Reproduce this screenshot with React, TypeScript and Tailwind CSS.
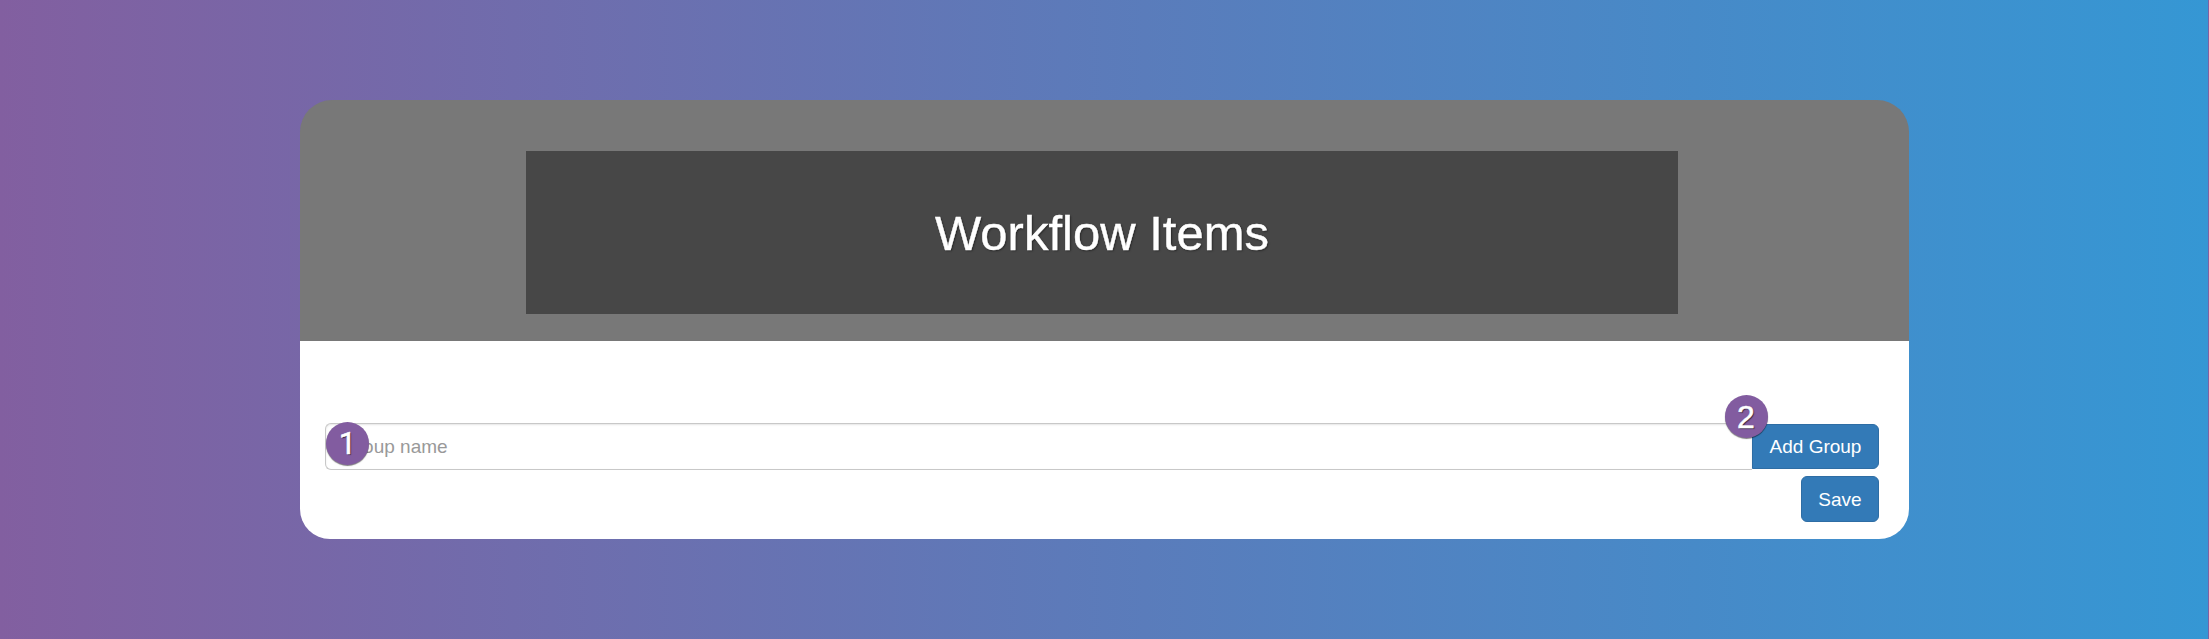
function Badge({ label, className }: { label: string; className: string }) {
  return (
    <span
      className={`absolute z-10 flex h-[43px] w-[43px] items-center justify-center rounded-full bg-[#825ca0] leading-none text-white shadow-[0_1px_1px_rgba(0,0,0,0.5)] [text-shadow:1px_1px_1px_rgba(0,0,0,0.6)] [-webkit-text-stroke:0.5px_white] ${className}`}
    >
      {label}
    </span>
  );
}

export default function App() {
  return (
    <main className="h-[639px] w-full bg-[linear-gradient(to_right,#825fa0,#3597d4)] bg-[length:2208px_100%] bg-repeat-x pt-[100px] pl-[300px] font-['Liberation_Sans',Arial,sans-serif]">
      <section className="flex h-[439px] w-[1609px] flex-col">
        <header className="h-[241px] rounded-t-[32px] bg-[#787878] pt-[51px] pl-[226px]">
          <div className="flex h-[163px] w-[1152px] items-center justify-center bg-[#474747] pt-[2px]">
            <h1 className="text-[49px] leading-none text-white [text-shadow:1px_1px_2px_rgba(0,0,0,0.5)] [-webkit-text-stroke:0.4px_white]">
              Workflow Items
            </h1>
          </div>
        </header>
        <form
          className="flex flex-1 flex-col items-end rounded-b-[30px] bg-white pt-[82px] pr-[30px] pl-[25px] text-[19px]"
          onSubmit={(event) => event.preventDefault()}
        >
          <div className="relative flex h-[47px] w-full items-center">
            <input
              aria-label="Group name"
              placeholder="Group name"
              className="h-[47px] min-w-0 flex-1 rounded-l-[6px] border border-r-0 border-[#c8c8c8] px-[16px] shadow-[inset_0_1px_2px_rgba(0,0,0,0.1)] placeholder:text-[#999]"
            />
            <button className="h-[45px] w-[127px] rounded-r-[6px] border border-[#2e6da4] bg-[#337ab7] pt-[2px] text-white">
              Add Group
            </button>
            <Badge label="1" className="top-[-1.5px] left-[1px] font-[Roboto] text-[31px]" />
            <Badge label="2" className="top-[-28px] left-[1399.5px] text-[32px]" />
          </div>
          <button className="mt-[6px] h-[46px] w-[78px] rounded-[6px] border border-[#2e6da4] bg-[#337ab7] pt-[3px] text-white">
            Save
          </button>
        </form>
      </section>
    </main>
  );
}
